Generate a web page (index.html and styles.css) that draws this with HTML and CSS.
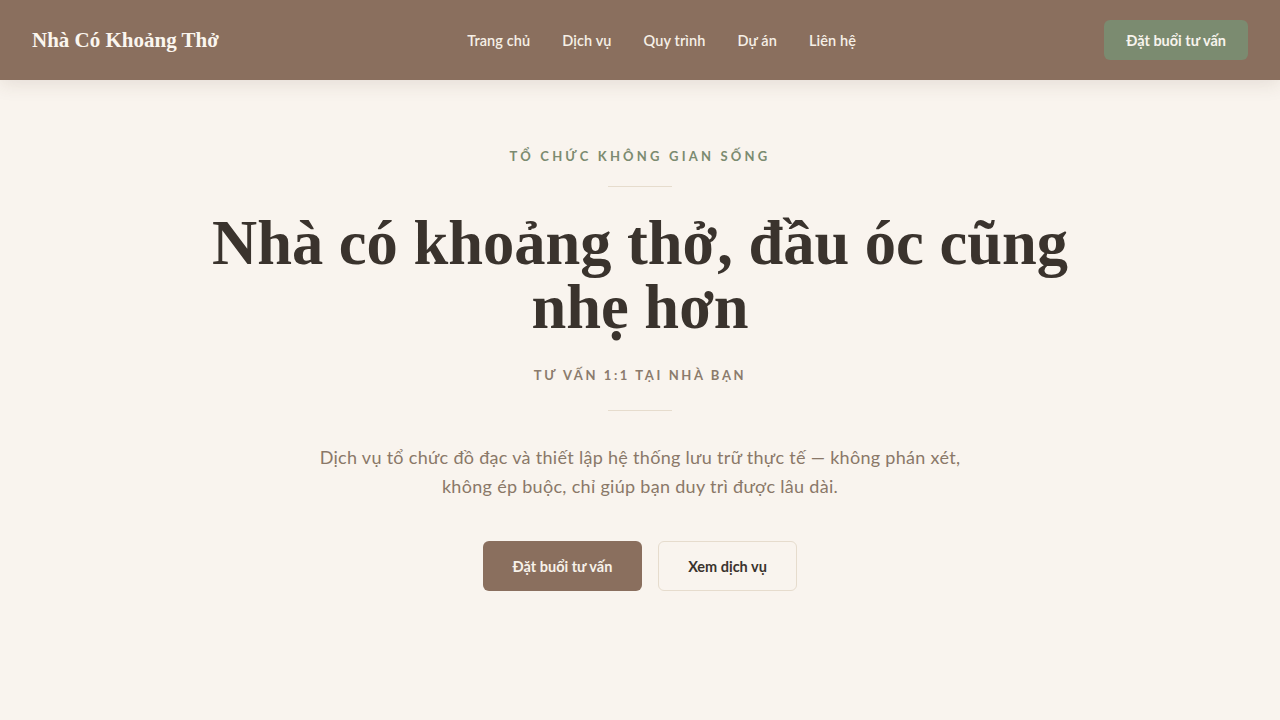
FILE: index.html
```html
<!DOCTYPE html>
<html lang="vi">
<head>
<meta charset="utf-8">
<title>Nhà Có Khoảng Thở</title>
<link rel="stylesheet" href="styles.css">
</head>
<body>
<header class="site-header">
  <a class="logo" href="#">Nhà Có Khoảng Thở</a>
  <nav class="nav">
    <a href="#">Trang chủ</a>
    <a href="#">Dịch vụ</a>
    <a href="#">Quy trình</a>
    <a href="#">Dự án</a>
    <a href="#">Liên hệ</a>
  </nav>
  <a class="btn btn-green" href="#">Đặt buổi tư vấn</a>
</header>
<main class="hero">
  <p class="eyebrow">Tổ chức không gian sống</p>
  <span class="rule"></span>
  <h1 class="title">Nhà có khoảng thở, đầu óc cũng nhẹ hơn</h1>
  <p class="subline">Tư vấn 1:1 tại nhà bạn</p>
  <span class="rule rule-low"></span>
  <p class="lead">Dịch vụ tổ chức đồ đạc và thiết lập hệ thống lưu trữ thực tế — không phán xét, không ép buộc, chỉ giúp bạn duy trì được lâu dài.</p>
  <div class="actions">
    <a class="btn btn-primary" href="#">Đặt buổi tư vấn</a>
    <a class="btn btn-outline" href="#">Xem dịch vụ</a>
  </div>
</main>
</body>
</html>
```
FILE: styles.css
```css
* { box-sizing: border-box; }
html, body { margin: 0; padding: 0; }
body {
  background: #f9f4ee;
  font-family: "Lato", "Liberation Sans", sans-serif;
  color: #3a332d;
  min-height: 720px;
}
a { text-decoration: none; color: inherit; }

.site-header {
  height: 80px;
  background: #8a6f5e;
  display: flex;
  align-items: center;
  justify-content: space-between;
  padding: 0 32px;
  box-shadow: 0 4px 18px rgba(80, 60, 40, 0.12);
  position: relative;
}
.logo {
  font-family: "Liberation Serif", serif;
  font-weight: 700;
  font-size: 21px;
  color: #fbf6ef;
}
.nav {
  display: flex;
  gap: 32px;
  font-size: 14.5px;
  font-weight: 600;
  letter-spacing: 0.1px;
  color: #f6efe6;
}
.btn {
  display: inline-flex;
  align-items: center;
  justify-content: center;
  font-size: 14.5px;
  font-weight: 700;
  border-radius: 6px;
}
.btn-green {
  background: #7b8b70;
  color: #f7f3ec;
  height: 40px;
  padding: 0 22px;
}

.hero {
  display: flex;
  flex-direction: column;
  align-items: center;
  text-align: center;
  padding-top: 68px;
}
.eyebrow {
  margin: 0;
  font-size: 13px;
  font-weight: 700;
  letter-spacing: 3.2px;
  text-transform: uppercase;
  color: #7b8b70;
  line-height: 16px;
}
.rule {
  display: block;
  width: 64px;
  height: 1px;
  background: #e6dccd;
  margin: 22px 0 0;
}
.rule-low { margin-top: 27px; }
.title {
  margin: 24px 0 0;
  font-family: "Liberation Serif", serif;
  font-weight: 700;
  font-size: 62.5px;
  line-height: 64px;
  color: #3a332d;
  max-width: 900px;
}
.subline {
  margin: 28px 0 0;
  font-size: 13px;
  font-weight: 700;
  letter-spacing: 2.6px;
  text-transform: uppercase;
  color: #8b7b6c;
  line-height: 16px;
}
.lead {
  margin: 32px 0 0;
  max-width: 680px;
  font-size: 18px;
  line-height: 29px;
  letter-spacing: 0.3px;
  color: #8a7868;
}
.actions {
  display: flex;
  gap: 16px;
  margin-top: 40px;
}
.btn-primary {
  height: 50px;
  width: 159px;
  background: #8a6f5e;
  color: #f8f2ea;
}
.btn-outline {
  height: 50px;
  width: 139px;
  border: 1px solid #e6dccd;
  color: #3a332d;
  background: transparent;
}
```
